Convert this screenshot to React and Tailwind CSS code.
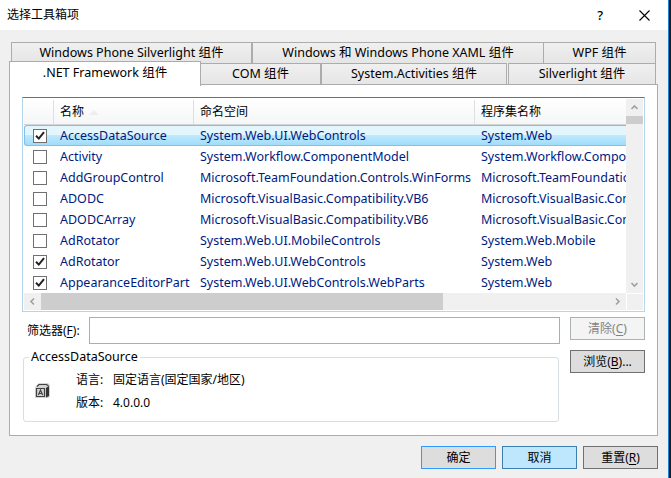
const rows = [
  ['AccessDataSource', 'System.Web.UI.WebControls', 'System.Web', true],
  ['Activity', 'System.Workflow.ComponentModel', 'System.Workflow.ComponentModel', false],
  ['AddGroupControl', 'Microsoft.TeamFoundation.Controls.WinForms', 'Microsoft.TeamFoundation.Controls', false],
  ['ADODC', 'Microsoft.VisualBasic.Compatibility.VB6', 'Microsoft.VisualBasic.Compatibility', false],
  ['ADODCArray', 'Microsoft.VisualBasic.Compatibility.VB6', 'Microsoft.VisualBasic.Compatibility', false],
  ['AdRotator', 'System.Web.UI.MobileControls', 'System.Web.Mobile', false],
  ['AdRotator', 'System.Web.UI.WebControls', 'System.Web', true],
  ['AppearanceEditorPart', 'System.Web.UI.WebControls.WebParts', 'System.Web', true],
];

function Check({ on }) {
  return (
    <span className="flex h-[14px] w-[14px] shrink-0 items-center justify-center border border-[#707070] bg-white">
      {on && (
        <svg width="12" height="12" viewBox="0 0 12 12" fill="none" stroke="#212121" strokeWidth="2">
          <path d="M2 5.8 4.8 8.6 10 2.2" />
        </svg>
      )}
    </span>
  );
}

function Arrow({ d }) {
  return (
    <svg className="shrink-0" width="17" height="17" viewBox="0 0 17 17" fill="none" stroke="#a0a0a0" strokeWidth="1.6">
      <path d={d} />
    </svg>
  );
}

function Tab({ className, children }) {
  return (
    <div className={'flex items-center justify-center border-[#acacac] bg-linear-to-b from-[#f0f0f0] to-[#e5e5e5] ' + className}>
      {children}
    </div>
  );
}

function Button({ className, children, hot }) {
  return (
    <button className={'flex h-[23px] w-[75px] items-center justify-center border ' + className}>
      <span>
        {children}
        {hot && <>(<u className="underline-offset-2">{hot}</u>)</>}
        {hot === 'B' && '...'}
      </span>
    </button>
  );
}

export default function App() {
  return (
    <div className="flex h-[478px] w-[671px] overflow-hidden bg-[#1b1b1c] font-['Noto_Sans','Noto_Sans_CJK_SC',sans-serif] text-[12px] leading-[18px] whitespace-nowrap text-black">
      <div className="flex w-[669px] flex-col border-r border-[#1883d7] bg-[#f0f0f0]">
        <header className="flex h-[30px] shrink-0 items-center bg-white pr-[18px] pl-[7px]">
          <span className="grow">选择工具箱项</span>
          <span className="mr-[36px] text-[13px] font-medium">?</span>
          <svg width="11" height="11" viewBox="0 0 11 11" stroke="#000" strokeWidth="1.1">
            <path d="M.5 .5 10.5 10.5M10.5 .5.5 10.5" />
          </svg>
        </header>

        <div className="mt-[12px] ml-[11px] flex h-[21px] w-[645px] shrink-0 text-[12.5px]">
          <Tab className="w-[241px] border-t border-r border-l">Windows Phone Silverlight 组件</Tab>
          <Tab className="w-[291px] border-t border-l">Windows 和 Windows Phone XAML 组件</Tab>
          <Tab className="w-[113px] border-x border-t">WPF 组件</Tab>
        </div>
        <div className="ml-[9px] flex h-[22px] w-[649px] shrink-0 items-end text-[12.5px]">
          <div className="z-10 -mb-px flex h-[25px] w-[192px] items-center justify-center border-x border-t border-[#acacac] bg-white pb-[3px]">
            .NET Framework 组件
          </div>
          <Tab className="h-[22px] w-[120px] border-t border-r pb-[2px]">COM 组件</Tab>
          <Tab className="h-[22px] w-[186px] border-x border-t pb-[2px]">System.Activities 组件</Tab>
          <Tab className="ml-px h-[22px] w-[148px] border-x border-t pb-[2px]">Silverlight 组件</Tab>
        </div>

        <main className="-mt-px ml-[9px] flex h-[352px] w-[649px] shrink-0 flex-col border border-[#acacac] bg-white px-[13px] pt-[12px]">
          <section className="-ml-px flex h-[215px] w-[623px] shrink-0 flex-col border border-[#b5d5ec] border-t-[#3c7fb1] p-px text-[12.5px]">
            <div className="flex h-[194px] shrink-0">
              <div className="w-[602px] overflow-hidden">
                <div className="flex h-[26px] border-b border-[#d5d5d5] bg-linear-to-b from-white to-[#f5f6f7] pt-px text-[12px]">
                  <div className="w-[30px] border-r border-[#dedfe1]" />
                  <div className="flex w-[140px] items-center border-r border-[#dedfe1] pl-[6px]">
                    名称
                    <svg className="ml-[5px]" width="10" height="5" viewBox="0 0 10 5" fill="#eeeeee"><path d="M0 5 5 0l5 5z" /></svg>
                  </div>
                  <div className="flex w-[281px] items-center border-r border-[#dedfe1] pl-[6px]">命名空间</div>
                  <div className="flex items-center pl-[6px]">程序集名称</div>
                </div>
                {rows.map((r, i) => (
                  <div
                    key={i}
                    className={
                      'flex h-[21px] items-center text-[#001a80] ' +
                      (i === 0
                        ? 'rounded-l-[3px] border-y border-l border-[#7fc0ec] bg-linear-to-b from-[#e3f5fd] from-45% via-[#bfe9fd] via-50% to-[#a0dcfa] pl-[8px]'
                        : 'pl-[9px]')
                    }
                  >
                    <Check on={r[3]} />
                    <span className="ml-[13px] w-[140px] shrink-0">{r[0]}</span>
                    <span className="w-[281px] shrink-0">{r[1]}</span>
                    <span>{r[2]}</span>
                  </div>
                ))}
              </div>
              <div className="flex w-[17px] flex-col items-center bg-[#f0f0f0]">
                <Arrow d="m5.5 10 3-3 3 3" />
                <div className="h-[8px] w-full bg-[#cdcdcd]" />
                <div className="grow" />
                <Arrow d="m5.5 7 3 3 3-3" />
              </div>
            </div>
            <div className="flex h-[17px] bg-[#f0f0f0]">
              <Arrow d="M10 5.5 7 8.5l3 3" />
              <div className="w-[402px] bg-[#cdcdcd]" />
              <div className="grow" />
              <Arrow d="m7 5.5 3 3-3 3" />
              <div className="w-[17px] border-t border-l border-white" />
            </div>
          </section>

          <div className="flex">
            <div className="mt-[5px] w-[537px]">
              <div className="flex">
                <label className="mt-[5px] w-[66px] pl-[4px]">筛选器(<u className="underline-offset-2">F</u>):</label>
                <input className="h-[27px] w-[471px] border border-[#abadb3] bg-white" />
              </div>
              <fieldset className="mt-[4px] flex h-[74px] w-[536px] flex-col rounded-[3px] border border-[#d5dfe5]">
                <legend className="ml-[5px] h-[18px] px-[2px] text-[12.5px]">AccessDataSource</legend>
                <div className="flex pt-[5px]">
                  <svg className="mt-[12px] ml-[11px]" width="16" height="16" viewBox="0 0 16 16">
                    <path d="M0 4 4 0h9l2 2v12l-2 1H0z" fill="#d4d4d4" />
                    <path d="M1.500 5.500h8v8h-8zM2 3.500l2-2h7.500l2 1.500" fill="none" stroke="#424242" strokeWidth="1.2" />
                    <path d="m11 5 3-2v10l-3 1.500z" fill="#333" />
                    <path d="m3.400 12 2.100-5 2.100 5M4.200 10.500h2.600" fill="none" stroke="#424242" strokeWidth="1.2" />
                  </svg>
                  <div className="ml-[25px] grid grid-cols-[37px_auto] gap-y-[5px]">
                    <span>语言:</span><span>固定语言(固定国家/地区)</span>
                    <span>版本:</span><span>4.0.0.0</span>
                  </div>
                </div>
              </fieldset>
            </div>
            <div className="mt-[5px] ml-[10px] flex flex-col gap-[10px]">
              <Button className="border-[#adb2b5] bg-[#f4f4f4] text-[#838383]" hot="C">清除</Button>
              <Button className="border-[#707070] bg-[#dddddd]" hot="B">浏览</Button>
            </div>
          </div>
        </main>

        <footer className="mt-[10px] flex justify-end gap-[6px] pr-[10px]">
          <Button className="border-[#3399ff] bg-[#dddddd]">确定</Button>
          <Button className="border-[#3c7fb1] bg-[#bee6fd]">取消</Button>
          <Button className="border-[#707070] bg-[#dddddd]" hot="R">重置</Button>
        </footer>
      </div>
    </div>
  );
}
